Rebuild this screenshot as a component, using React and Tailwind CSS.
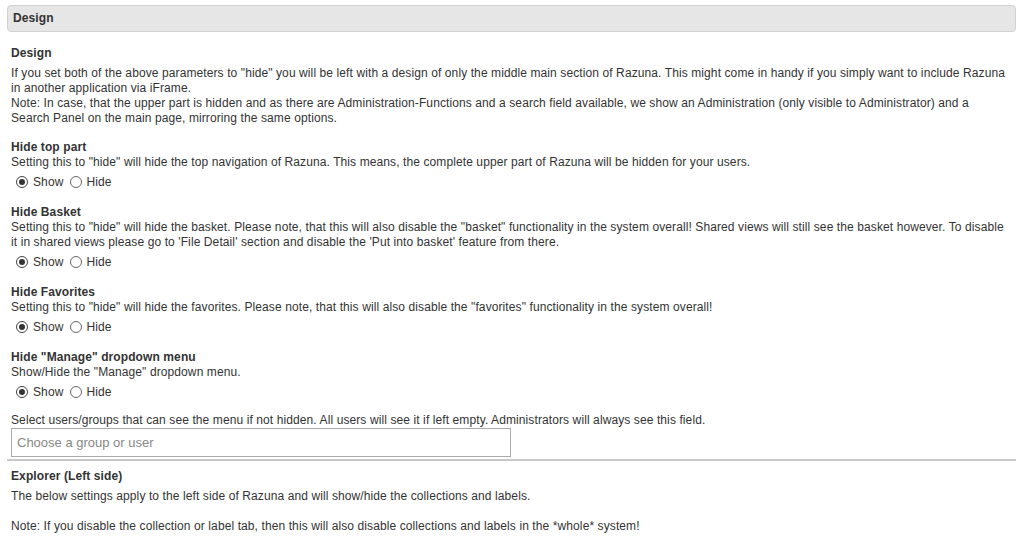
import React, { useState } from 'react';

function Radio({ checked }) {
  return (
    <span
      className={`inline-flex items-center justify-center w-[12px] h-[12px] rounded-full border bg-white ${checked ? 'border-[#444]' : 'border-[#666]'}`}
    >
      {checked && <span className="block w-[6px] h-[6px] rounded-full bg-[#333]" />}
    </span>
  );
}

function ShowHide() {
  const [value, setValue] = useState('show');
  return (
    <div className="flex items-center h-[18px] mt-[3px] pl-[5px]">
      <label className="flex items-center cursor-pointer" onClick={() => setValue('show')}>
        <Radio checked={value === 'show'} />
        <span className="ml-[5px]">Show</span>
      </label>
      <label className="flex items-center cursor-pointer ml-[7px]" onClick={() => setValue('hide')}>
        <Radio checked={value === 'hide'} />
        <span className="ml-[4px]">Hide</span>
      </label>
    </div>
  );
}

function Setting({ title, children }) {
  return (
    <div className="mt-[14px]">
      <div className="font-bold">{title}</div>
      <div>{children}</div>
      <ShowHide />
    </div>
  );
}

export default function App() {
  return (
    <div className="bg-white min-h-[547px] pl-[7px] pr-[11px] pt-[5px] text-[12px] leading-[15px] tracking-[0.1px] text-[#333]" style={{ fontFamily: '"Liberation Sans", Arial, sans-serif' }}>
      <div className="h-[27px] flex items-center pl-[5px] bg-[#e6e6e6] border border-[#d2d2d2] rounded-[4px] font-bold">
        Design
      </div>

      <div className="pl-[4px] pr-[8px]">
        <div className="font-bold mt-[14px]">Design</div>
        <p className="mt-[5px]">
          If you set both of the above parameters to "hide" you will be left with a design of only the middle main section of Razuna. This might come in handy if you simply want to include Razuna in another application via iFrame.
          <br />
          Note: In case, that the upper part is hidden and as there are Administration-Functions and a search field available, we show an Administration (only visible to Administrator) and a Search Panel on the main page, mirroring the same options.
        </p>

        <div className="mt-[3px]">
          <Setting title="Hide top part">
            Setting this to "hide" will hide the top navigation of Razuna. This means, the complete upper part of Razuna will be hidden for your users.
          </Setting>
          <Setting title="Hide Basket">
            Setting this to "hide" will hide the basket. Please note, that this will also disable the "basket" functionality in the system overall! Shared views will still see the basket however. To disable it in shared views please go to 'File Detail' section and disable the 'Put into basket' feature from there.
          </Setting>
          <Setting title="Hide Favorites">
            Setting this to "hide" will hide the favorites. Please note, that this will also disable the "favorites" functionality in the system overall!
          </Setting>
          <Setting title={'Hide "Manage" dropdown menu'}>
            Show/Hide the "Manage" dropdown menu.
          </Setting>
        </div>

        <p className="mt-[12px]">
          Select users/groups that can see the menu if not hidden. All users will see it if left empty. Administrators will always see this field.
        </p>
        <input
          type="text"
          placeholder="Choose a group or user"
          className="w-[500px] h-[29px] border border-[#aaa] px-[5px] text-[13px] tracking-normal placeholder:text-[#888] outline-none"
          style={{ fontFamily: '"Liberation Sans", Arial, sans-serif' }}
        />
      </div>

      <hr className="mt-[2px] border-0 h-[2px] bg-[#c8c8c8]" />

      <div className="px-[4px]">
        <div className="font-bold mt-[8px]">Explorer (Left side)</div>
        <p className="mt-[5px]">The below settings apply to the left side of Razuna and will show/hide the collections and labels.</p>
        <p className="mt-[15px]">Note: If you disable the collection or label tab, then this will also disable collections and labels in the *whole* system!</p>
      </div>
    </div>
  );
}
